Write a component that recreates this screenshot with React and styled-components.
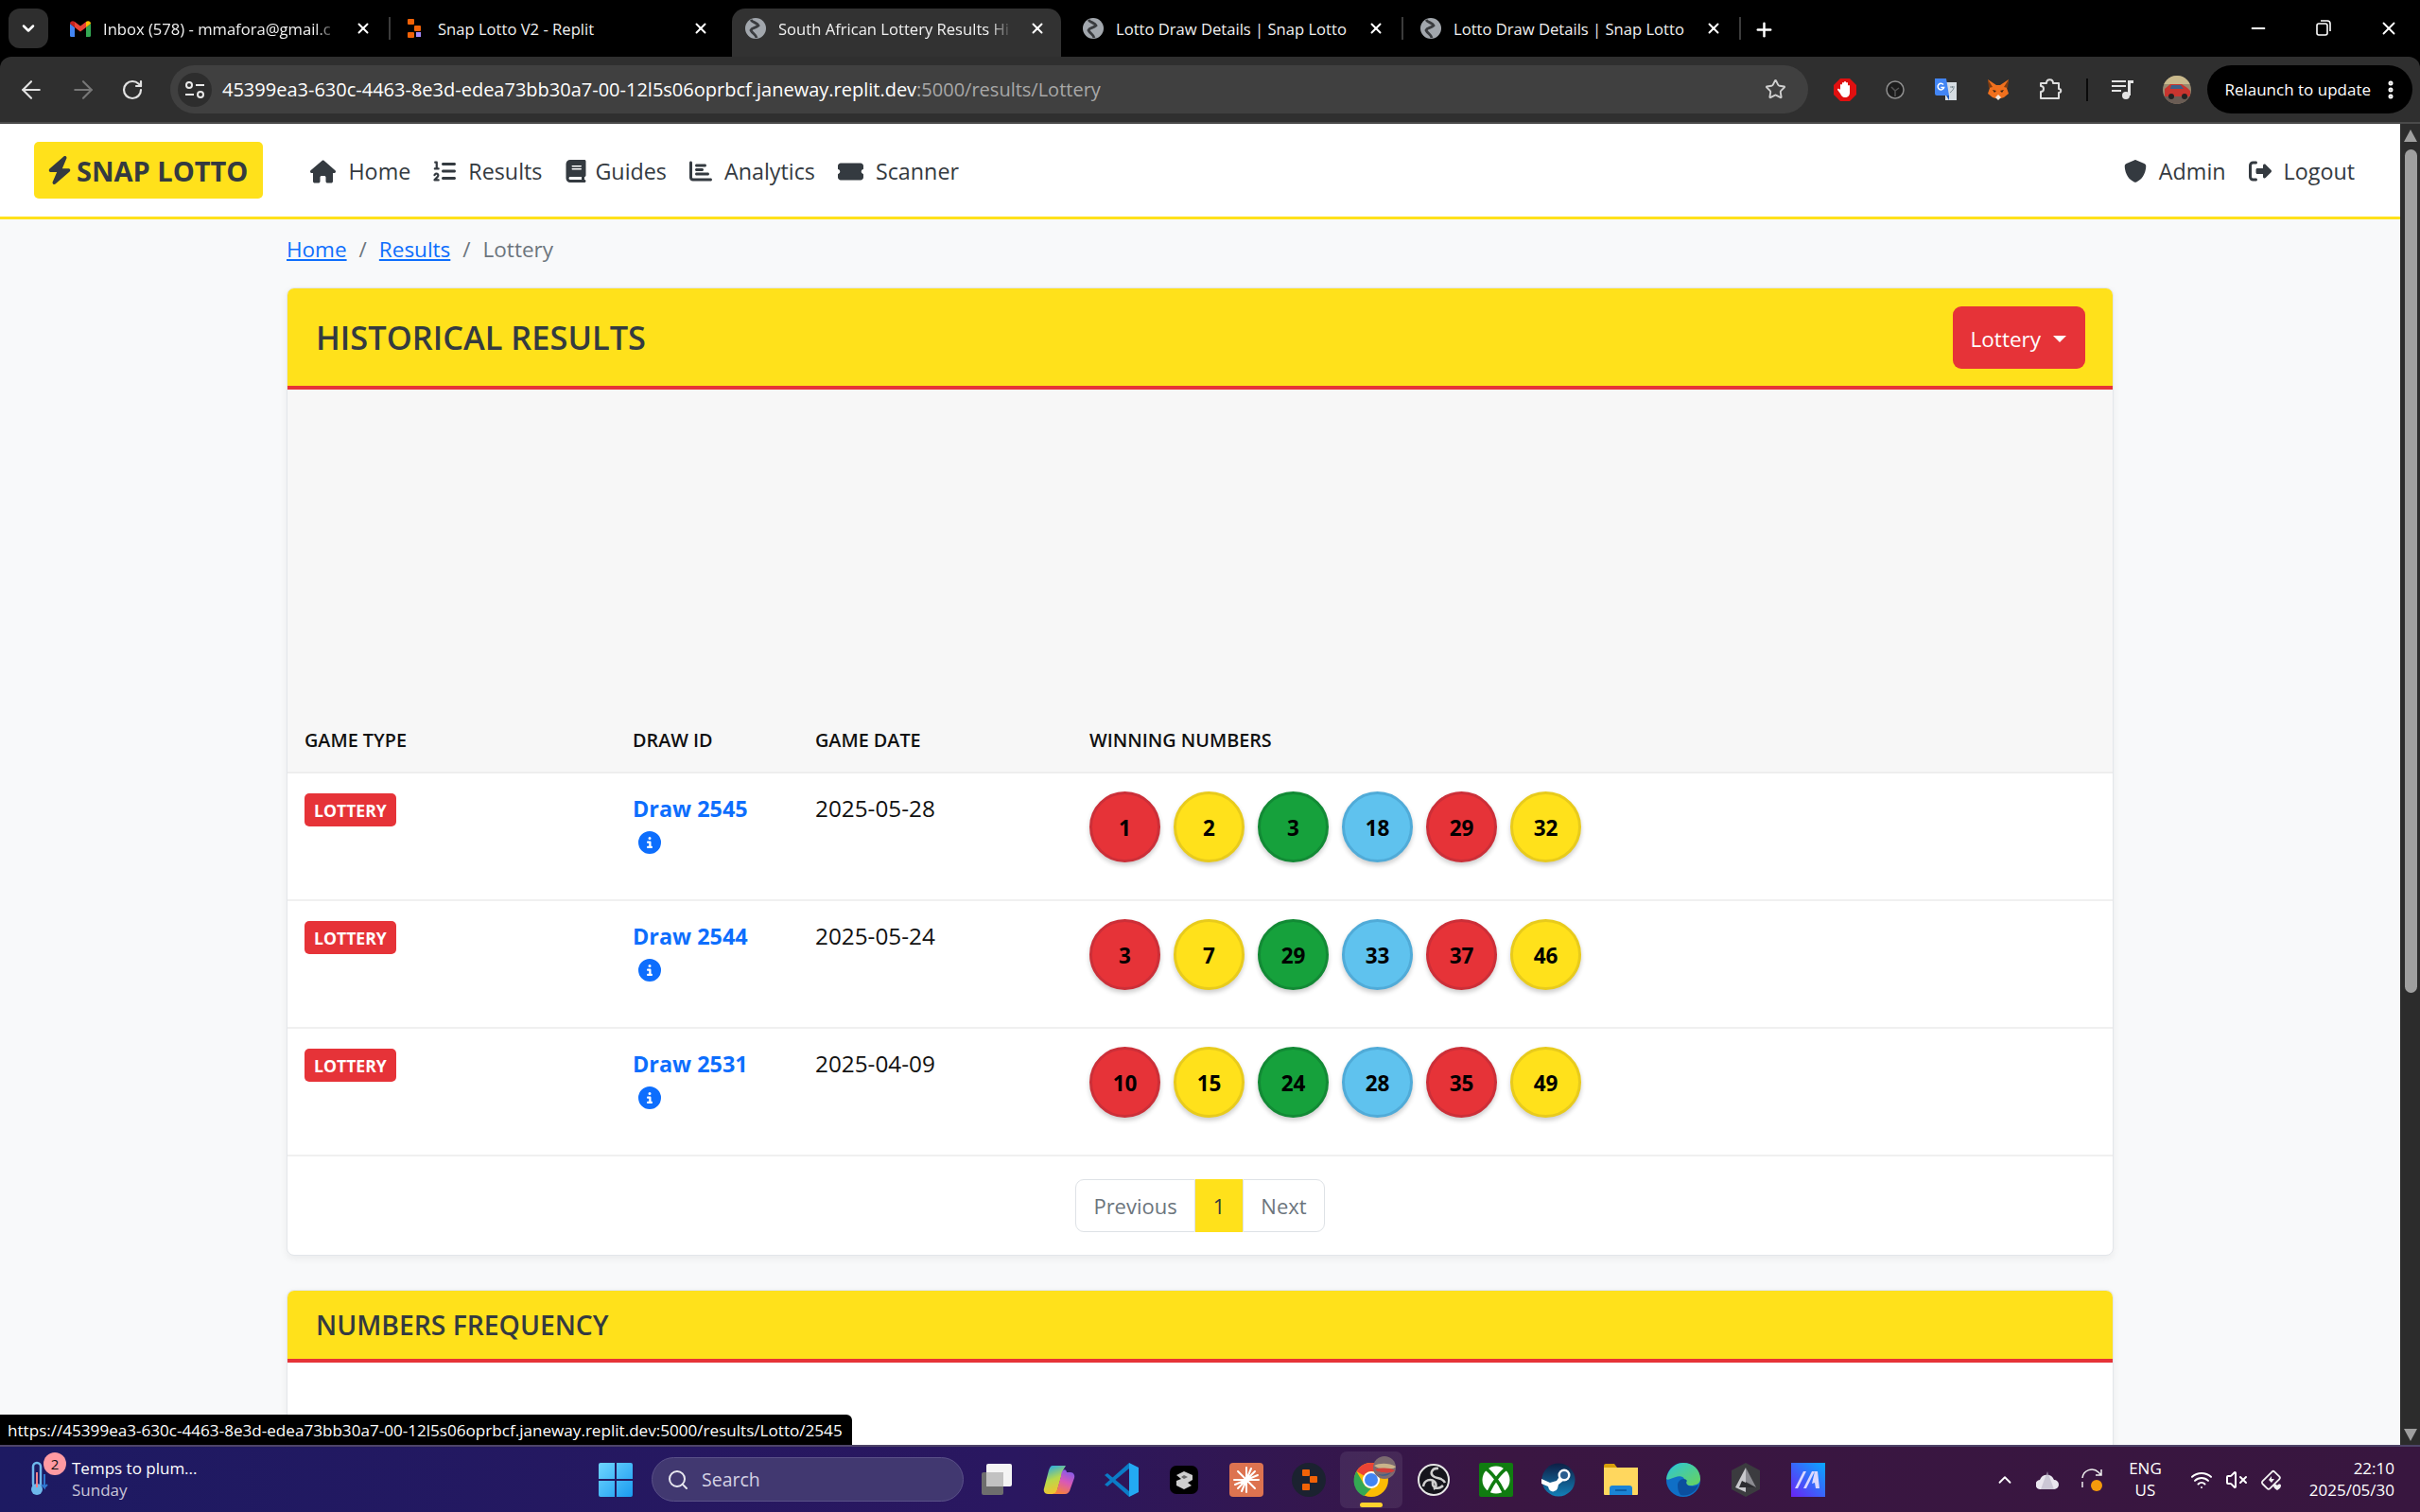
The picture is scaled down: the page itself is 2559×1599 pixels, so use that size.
import React from 'react';
import styled, { createGlobalStyle } from 'styled-components';
import { ArrowLeft, ArrowRight, RotateCw, Star, X, Minus, Plus, ChevronDown, ChevronUp, Search as SearchIcon, Wifi, VolumeX, EllipsisVertical } from 'lucide-react';
import { FaBolt, FaHouse, FaListOl, FaBook, FaChartBar, FaTicketSimple, FaShield, FaRightFromBracket, FaCircleInfo } from 'react-icons/fa6';

const YELLOW = '#ffe11b';
const RED = '#e63338';
const FONT = '"Open Sans", "Noto Sans", sans-serif';

const GlobalStyle = createGlobalStyle`
  html, body { margin: 0; padding: 0; overflow: hidden; background: #000; }
  * { box-sizing: border-box; }
  body { font-family: ${FONT}; }
`;

const Screen = styled.div`
  display: flex;
  flex-direction: column;
  width: 2559px;
  height: 1599px;
  overflow: hidden;
`;

/* browser chrome */
const TabBar = styled.div`
  display: flex;
  align-items: flex-end;
  height: 60px;
  flex: none;
  background: #000;
  color: #fff;
`;

const TabMenu = styled.div`
  display: flex;
  align-items: center;
  justify-content: center;
  width: 42px;
  height: 42px;
  margin: 0 9px 9px;
  border-radius: 12px;
  background: #2e2e2e;
`;

const Tab = styled.div`
  position: relative;
  display: flex;
  align-items: center;
  width: ${p => (p.$active ? '348px' : '357px')};
  height: 51px;
  margin-right: ${p => (p.$active ? '9px' : '0')};
  padding: 0 ${p => (p.$active ? '16px' : '24px')} 9px 14px;
  font-size: 16.6px;
  border-radius: 14px 14px 0 0;
  background: ${p => (p.$active ? '#323232' : 'transparent')};

  &::after {
    content: '';
    display: ${p => (p.$sep ? 'block' : 'none')};
    position: absolute;
    right: 4px;
    top: 9px;
    height: 24px;
    width: 2px;
    background: #3c3c3c;
  }
`;

const TabTitle = styled.span`
  flex: 1;
  margin: 0 17px 0 13px;
  white-space: nowrap;
  color: #f1f1f1;
  ${p => (p.$fade ? 'mask-image: linear-gradient(to right, #000 90%, transparent);' : '')}
`;

const NewTab = styled.div`
  display: flex;
  padding: 0 0 17px 9px;
`;

const WindowControls = styled.div`
  display: flex;
  gap: 47px;
  margin-left: auto;
  padding: 0 22px 19px 0;
`;

const Toolbar = styled.div`
  display: flex;
  align-items: center;
  flex: none;
  height: 71px;
  padding: 0 8px 0 18px;
  background: #2f2f2f;
  border-bottom: 2px solid #4a4a4a;
  border-radius: 12px 12px 0 0;
  color: #d8d8d8;
`;

const NavIcons = styled.div`
  display: flex;
  align-items: center;
  gap: 25px;
  margin-right: 28px;
`;

const Omnibox = styled.div`
  display: flex;
  align-items: center;
  width: 1732px;
  height: 51px;
  padding: 0 23px 0 8px;
  border-radius: 26px;
  background: #404040;
  font-size: 20px;
`;

const SiteControls = styled.div`
  display: flex;
  align-items: center;
  justify-content: center;
  width: 36px;
  height: 36px;
  margin-right: 11px;
  border-radius: 50%;
  background: #2d2d2d;
`;

const Host = styled.span`
  color: #fff;
  white-space: nowrap;
`;

const Path = styled.span`
  color: #a8a8a8;
  white-space: nowrap;
`;

const Extensions = styled.div`
  display: flex;
  align-items: center;
  margin-left: 27px;
  gap: 31px;
`;

const ToolDivider = styled.div`
  width: 2px;
  height: 24px;
  margin: 0 -6px;
  background: #0a0a0a;
`;

const Relaunch = styled.div`
  display: flex;
  align-items: center;
  gap: 9px;
  height: 51px;
  margin-left: auto;
  padding: 0 11px 0 18px;
  border-radius: 26px;
  background: #000;
  color: #fff;
  font-size: 17px;
  white-space: nowrap;
`;

/* page */
const Viewport = styled.div`
  position: relative;
  flex: 1;
  display: flex;
  min-height: 0;
  background: #f8f9fa;
`;

const Page = styled.div`
  flex: 1;
  min-width: 0;
  overflow: hidden;
`;

const Navbar = styled.nav`
  display: flex;
  align-items: center;
  height: 101px;
  padding: 0 36px;
  background: #fff;
  border-bottom: 3px solid ${YELLOW};
  color: #343a40;
`;

const Brand = styled.div`
  display: flex;
  align-items: center;
  gap: 3px;
  height: 60px;
  padding: 0 16px 0 12px;
  margin-right: 50px;
  border-radius: 5px;
  background: ${YELLOW};
  font-size: 29px;
  font-weight: 700;
  white-space: nowrap;
`;

const NavGroup = styled.div`
  display: flex;
  align-items: center;
  gap: 24px;
  margin-left: ${p => (p.$right ? 'auto' : '0')};
  padding-right: ${p => (p.$right ? '12px' : '0')};
`;

const NavItem = styled.div`
  display: flex;
  align-items: center;
  gap: ${p => (p.$tight ? '8px' : '13px')};
  padding-top: 2px;
  font-size: 23.3px;
  font-weight: 500;
  white-space: nowrap;
`;

const Container = styled.main`
  width: 1932px;
  margin: 0 auto;
`;

const Breadcrumb = styled.div`
  display: flex;
  align-items: center;
  gap: 13px;
  height: 72px;
  padding-bottom: 10px;
  font-size: 22.5px;
  color: #6c757d;
`;

const CrumbLink = styled.a`
  color: #0d6efd;
  text-decoration: underline;
`;

const Card = styled.section`
  margin-bottom: 36px;
  background: #fff;
  border: 1px solid #e3e6ea;
  border-bottom-width: ${p => (p.$open ? '0' : '1px')};
  border-radius: 8px 8px ${p => (p.$open ? '0 0' : '8px 8px')};
  box-shadow: 0 3px 9px rgba(0, 0, 0, 0.06);
  overflow: hidden;
`;

const CardHeader = styled.header`
  display: flex;
  align-items: center;
  justify-content: space-between;
  height: ${p => p.$height}px;
  padding: 0 29px 0 30px;
  background: ${YELLOW};
  border-bottom: 4px solid ${RED};
`;

const CardTitle = styled.h2`
  margin: 0;
  font-size: ${p => p.$size}px;
  font-weight: 600;
  color: #343a40;
  white-space: nowrap;
`;

const DropButton = styled.button`
  display: flex;
  align-items: center;
  gap: 13px;
  height: 66px;
  padding: 3px 20px 0 19px;
  border: 0;
  border-radius: 9px;
  background: ${RED};
  color: #fff;
  font-family: inherit;
  font-size: 22.5px;

  &::after {
    content: '';
    border-top: 7px solid #fff;
    border-left: 7px solid transparent;
    border-right: 7px solid transparent;
  }
`;

const AdSlot = styled.div`
  height: 341px;
  background: #f7f7f7;
`;

const TableRow = styled.div`
  display: grid;
  grid-template-columns: 347px 193px 290px 1fr;
  padding: 0 18px;
`;

const HeadRow = styled(TableRow)`
  align-items: center;
  height: 65px;
  padding-bottom: 4px;
  background: #f7f7f7;
  border-bottom: 2px solid #eee;
  font-size: 19.8px;
  font-weight: 600;
  color: #111;
  white-space: nowrap;
`;

const BodyRow = styled(TableRow)`
  height: 135px;
  padding-top: 19px;
  border-bottom: 2px solid #f0f0f0;
`;

const Badge = styled.span`
  display: inline-flex;
  align-items: center;
  height: 35px;
  margin-top: 2px;
  padding: 0 10px;
  border-radius: 5px;
  background: ${RED};
  color: #fff;
  font-size: 17.6px;
  font-weight: 700;
`;

const DrawCell = styled.div`
  display: flex;
  flex-direction: column;
  align-items: flex-start;
`;

const DrawLink = styled.a`
  color: #0d6efd;
  font-size: 23.4px;
  font-weight: 700;
  line-height: 36px;
  white-space: nowrap;
`;

const InfoIcon = styled(FaCircleInfo)`
  margin: 6px 0 0 6px;
  color: #0d6efd;
`;

const DateCell = styled.div`
  font-size: 24.3px;
  font-weight: 500;
  line-height: 36px;
  color: #111;
`;

const Balls = styled.div`
  display: flex;
  gap: 14px;
`;

const Ball = styled.div`
  display: flex;
  align-items: center;
  justify-content: center;
  width: 75px;
  height: 75px;
  padding-top: 2px;
  border-radius: 50%;
  border: 3px solid ${p => p.$edge};
  background: ${p => p.$fill};
  box-shadow: 0 3px 5px rgba(0, 0, 0, 0.2);
  color: #000;
  font-size: 22.5px;
  font-weight: 700;
`;

const Pager = styled.div`
  display: flex;
  justify-content: center;
  padding: 24px 0;
`;

const PageItem = styled.div`
  display: flex;
  align-items: center;
  height: 56px;
  padding: 0 ${p => (p.$current ? '19px' : '18px')};
  background: ${p => (p.$current ? YELLOW : '#fff')};
  color: ${p => (p.$current ? '#343a40' : '#6c757d')};
  border: 1px solid #dee2e6;
  border-width: ${p => (p.$current ? '0' : '1px')};
  border-radius: ${p => p.$radius};
  font-size: 22px;
`;

const SectionBody = styled.div`
  height: 200px;
  background: #fff;
`;

const Scrollbar = styled.div`
  position: relative;
  flex: none;
  display: flex;
  flex-direction: column;
  align-items: center;
  justify-content: space-between;
  width: 21px;
  padding: 6px 0 4px;
  background: #2c2c2c;
`;

const ScrollThumb = styled.div`
  position: absolute;
  top: 27px;
  left: 5px;
  width: 13px;
  height: 892px;
  border-radius: 7px;
  background: #9f9f9f;
`;

const Arrow = styled.div`
  border-left: 7px solid transparent;
  border-right: 7px solid transparent;
  ${p => (p.$down ? 'border-top' : 'border-bottom')}: 13px solid #9f9f9f;
`;

const StatusTip = styled.div`
  position: absolute;
  left: 0;
  bottom: 0;
  height: 32px;
  display: flex;
  align-items: center;
  padding: 0 10px 0 8px;
  border-radius: 0 6px 0 0;
  background: #000;
  color: #fff;
  font-size: 17.1px;
  white-space: nowrap;
`;

/* taskbar */
const Taskbar = styled.footer`
  display: flex;
  align-items: center;
  flex: none;
  height: 71px;
  border-top: 2px solid #4e4468;
  background: linear-gradient(90deg, #1d1a62 0%, #2a1760 42%, #3a1642 62%, #38163f 100%);
  color: #fff;
`;

const Weather = styled.div`
  position: relative;
  display: flex;
  align-items: center;
  width: 618px;
  padding-left: 32px;
`;

const WeatherBadge = styled.span`
  position: absolute;
  left: 46px;
  top: -7px;
  display: flex;
  align-items: center;
  justify-content: center;
  width: 24px;
  height: 24px;
  border-radius: 50%;
  background: #ff9aa2;
  color: #111;
  font-size: 15px;
`;

const WeatherText = styled.div`
  display: flex;
  flex-direction: column;
  gap: 3px;
  margin-left: 24px;
  font-size: 17px;
  line-height: 20px;
`;

const WeatherSub = styled.span`
  color: #c9c6d8;
`;

const TaskSlot = styled.div`
  display: flex;
  align-items: center;
  justify-content: center;
  width: 66px;
  height: 60px;
  border-radius: 7px;
  position: relative;
  background: ${p => (p.$active ? 'rgba(255,255,255,0.08)' : 'transparent')};

  &::after {
    content: '';
    display: ${p => (p.$active ? 'block' : 'none')};
    position: absolute;
    bottom: 1px;
    left: 21px;
    width: 24px;
    height: 5px;
    border-radius: 3px;
    background: #ffd22e;
  }
`;

const SearchBox = styled.div`
  display: flex;
  align-items: center;
  gap: 13px;
  width: 330px;
  height: 47px;
  margin: 0 2px 0 5px;
  padding-left: 15px;
  border-radius: 24px;
  background: #413870;
  border: 1px solid #5a5188;
  color: #d4d2e4;
  font-size: 19.5px;
`;

const Tray = styled.div`
  display: flex;
  align-items: center;
  margin-left: auto;
  padding-right: 27px;
  gap: 22px;
`;

const Lang = styled.div`
  display: flex;
  flex-direction: column;
  align-items: center;
  gap: 3px;
  margin: 0 8px 0 4px;
  font-size: 17px;
  line-height: 20px;
`;

const Clock = styled.div`
  display: flex;
  flex-direction: column;
  align-items: flex-end;
  gap: 3px;
  margin-left: 4px;
  font-size: 17px;
  line-height: 20px;
`;

const TrayIcons = styled.div`
  display: flex;
  align-items: center;
  gap: 13px;
`;

/* little drawings */
const GmailIcon = () => (
  <svg width="22" height="17" viewBox="0 0 22 17">
    <path d="M0 3v12.5A1.5 1.5 0 0 0 1.5 17H5V7z" fill="#4285f4" />
    <path d="M22 3v12.5a1.5 1.5 0 0 1-1.500 1.500H17V7z" fill="#34a853" />
    <path d="M5 7l6 4.500L17 7V1l-6 4.500L5 1z" fill="#ea4335" />
    <path d="M0 3c0-2.500 3-3.500 5-2v6L0 3z" fill="#c5221f" />
    <path d="M22 3c0-2.500-3-3.500-5-2v6l5-4z" fill="#fbbc04" />
  </svg>
);

const ReplitIcon = () => (
  <svg width="19" height="20" viewBox="0 0 19 20">
    <rect x="0" y="0" width="7" height="6" rx="1" fill="#f26207" />
    <rect x="7" y="7" width="7" height="6" rx="1" fill="#f26207" />
    <rect x="0" y="14" width="7" height="6" rx="1" fill="#f26207" />
    <rect x="9" y="14" width="5" height="5" fill="#a78bfa" />
  </svg>
);

const TabGlobe = () => (
  <svg width="22" height="22" viewBox="0 0 22 22" fill="none">
    <circle cx="11" cy="11" r="11" fill="#a2a7ad" />
    <path d="M6 2c2 3 7 3 8 6-3 3-7 2-8 5 2 4 5 4 6 8" stroke="#3a3c3f" strokeWidth="2.800" />
  </svg>
);

const SiteIcon = () => (
  <svg width="22" height="20" viewBox="0 0 22 20" fill="none" stroke="#e8e8e8" strokeWidth="2">
    <circle cx="5" cy="5" r="3" />
    <path d="M12 5h9M1 15h9" />
    <circle cx="17" cy="15" r="3" />
  </svg>
);

const HandIcon = () => (
  <svg width="24" height="24" viewBox="0 0 24 24">
    <path d="M7 0h10l7 7v10l-7 7H7l-7-7V7z" fill="#e01010" />
    <path d="M7 12V7a1 1 0 0 1 2 0V5a1 1 0 0 1 2 0V4a1 1 0 0 1 2 0v1a1 1 0 0 1 2 0v3a1 1 0 0 1 2 0v7c0 3-2 5-5 5s-4-2-5-4l-3-4c0-1 1-2 3 0z" fill="#fff" />
  </svg>
);

const DarkExtIcon = () => (
  <svg width="20" height="20" viewBox="0 0 20 20" fill="none" stroke="#8f8f8f" strokeWidth="1.500">
    <circle cx="10" cy="10" r="9" fill="#1c1c1c" />
    <path d="M6 7l4 4 4-3M10 11v6" stroke="#555" />
  </svg>
);

const TranslateIcon = () => (
  <svg width="25" height="25" viewBox="0 0 25 25">
    <path d="M12 5h12v19H12z" fill="#d6dde3" />
    <path d="M1 1h12l3 18H3a2 2 0 0 1-2-2z" fill="#4285f4" />
    <path d="M16 24l-3-5h3z" fill="#1a56b8" />
    <path d="M17 10h5M19.500 9v2M21 11c-1 3-3 4-4 5" stroke="#7b8a92" strokeWidth="1" fill="none" />
    <path d="M10 7.500a3.300 3.300 0 1 0 .6 3H7.300" stroke="#fff" strokeWidth="1.500" fill="none" />
  </svg>
);

const FoxIcon = () => (
  <svg width="24" height="22" viewBox="0 0 24 22">
    <path d="M1 0l9 6h4l9-6-2 9 2 6-5 4-3 1h-6l-3-1-5-4 2-6z" fill="#f0701d" />
    <path d="M1 0l5 8-4 1zM23 0l-5 8 4 1z" fill="#7c3c12" />
    <path d="M9 19l3-3 3 3-3 3z" fill="#efe6dc" />
    <path d="M6 11l4 1-2 2zM18 11l-4 1 2 2z" fill="#3a2415" />
  </svg>
);

const PuzzleIcon = () => (
  <svg width="25" height="25" viewBox="0 0 25 25" fill="none" stroke="#dedede" strokeWidth="2" strokeLinejoin="round">
    <path d="M2 6h6c0-5 7-5 7 0h6v6c3 0 3 4 0 4v6H2v-7c4 0 4-6 0-6z" />
  </svg>
);

const MediaIcon = () => (
  <svg width="23" height="21" viewBox="0 0 23 21" fill="#e4e4e4">
    <path d="M0 1h15v2H0zM0 6h15v2H0zM0 11h10v2H0z" />
    <path d="M17 1h6v3h-3v13h-3z" />
    <circle cx="15" cy="17" r="4" />
  </svg>
);

const AvatarIcon = () => (
  <svg width="30" height="30" viewBox="0 0 30 30">
    <clipPath id="avatarClip"><circle cx="15" cy="15" r="15" /></clipPath>
    <g clipPath="url(#avatarClip)">
      <rect width="30" height="30" fill="#9a8a70" />
      <rect width="30" height="9" fill="#c9b98c" />
      <rect y="22" width="30" height="8" fill="#6a5c54" />
      <path d="M2 14l6-5h12l6 4 3 3v6H2z" fill="#c8352f" />
      <path d="M9 10h10l3 4H8z" fill="#3c5f88" />
      <circle cx="9" cy="22" r="3" fill="#222" />
      <circle cx="23" cy="22" r="3" fill="#222" />
    </g>
  </svg>
);

const WindowsIcon = () => (
  <svg width="36" height="36" viewBox="0 0 36 36">
    <defs>
      <linearGradient id="win" x1="0" y1="0" x2="1" y2="1">
        <stop offset="0" stopColor="#6fd6ff" />
        <stop offset="1" stopColor="#1a9bf0" />
      </linearGradient>
    </defs>
    <path d="M0 2a2 2 0 0 1 2-2h15v17H0zM19 0h15a2 2 0 0 1 2 2v15H19zM0 19h17v17H2a2 2 0 0 1-2-2zM19 19h17v15a2 2 0 0 1-2 2H19z" fill="url(#win)" />
  </svg>
);

const TaskViewIcon = () => (
  <svg width="32" height="34" viewBox="0 0 32 34">
    <rect x="5" y="0" width="27" height="24" rx="2" fill="#f4f4f4" />
    <rect x="0" y="9" width="23" height="24" rx="2" fill="#6e6e6e" />
    <rect x="5" y="9" width="18" height="15" fill="#c2c2c2" />
  </svg>
);

const CopilotIcon = () => (
  <svg width="34" height="32" viewBox="0 0 34 32">
    <defs>
      <linearGradient id="cpA" x1="0.2" y1="0" x2="0.5" y2="1">
        <stop offset="0" stopColor="#25a9e8" />
        <stop offset=".5" stopColor="#b7d84c" />
        <stop offset="1" stopColor="#f7c22e" />
      </linearGradient>
      <linearGradient id="cpB" x1="0.8" y1="0" x2="0.4" y2="1">
        <stop offset="0" stopColor="#7a5bf0" />
        <stop offset=".5" stopColor="#d858b8" />
        <stop offset="1" stopColor="#f6813c" />
      </linearGradient>
    </defs>
    <path d="M10 1h14l-3 5-6 21c-1 3-2 4-5 4H5c-3 0-5-3-4-6L6 6c1-3 2-5 4-5z" fill="url(#cpA)" />
    <path d="M21 6c2-2 4 0 4 2h4c3 0 5 3 4 6l-4 11c-1 4-3 6-6 6H9c3 0 5-2 6-5l4-14c0-3 1-5 2-6z" fill="url(#cpB)" />
  </svg>
);

const VsCodeIcon = () => (
  <svg width="36" height="36" viewBox="0 0 36 36">
    <path d="M26 0v36L0 13l3-2 23 19V6L3 25l-3-2z" fill="#0b7cc7" />
    <path d="M26 0l10 5v26l-10 5z" fill="#23a9f2" />
  </svg>
);

const CubeIcon = () => (
  <svg width="30" height="30" viewBox="0 0 30 30">
    <rect width="30" height="30" rx="7" fill="#000" />
    <path d="M15 6l9 4v5l-5 3 4 3-8 4-8-4v-5l5-2-5-4z" fill="#cfcfcf" />
    <path d="M15 14l-3-2 3-2 4 2z" fill="#6a6a6a" />
  </svg>
);

const BurstIcon = () => (
  <svg width="36" height="36" viewBox="0 0 36 36">
    <rect width="36" height="36" rx="4" fill="#dd7350" />
    <g stroke="#fff" strokeWidth="2" strokeLinecap="round">
      <path d="M18 18V5M18 18V31M18 18H31M18 18H5M18 18L27 9M18 18L9 27M18 18L27 27M18 18L9 9M18 18L23 6M18 18L13 30M18 18L30 13M18 18L6 23" />
    </g>
  </svg>
);

const ReplitTile = () => (
  <svg width="36" height="36" viewBox="0 0 36 36">
    <circle cx="18" cy="18" r="18" fill="#1b2230" />
    <rect x="11" y="7" width="8" height="7" rx="1" fill="#f26207" />
    <rect x="19" y="14" width="8" height="7" rx="1" fill="#f26207" />
    <rect x="11" y="22" width="8" height="7" rx="1" fill="#f26207" />
  </svg>
);

const ChromeIcon = () => (
  <svg width="36" height="36" viewBox="0 0 36 36" style={{ overflow: 'visible' }}>
    <circle cx="18" cy="18" r="18" fill="#fbbc04" />
    <path d="M18 0a18 18 0 0 1 15.600 9H18a9 9 0 0 0-7.800 4.500L2.400 9A18 18 0 0 1 18 0z" fill="#ea4335" />
    <path d="M2.400 9l7.800 13.500A9 9 0 0 0 18 27l-7.800 8.200A18 18 0 0 1 2.400 9z" fill="#34a853" />
    <circle cx="18" cy="18" r="9" fill="#fff" />
    <circle cx="18" cy="18" r="7" fill="#4285f4" />
    <circle cx="32" cy="5" r="12" fill="#7b6a70" />
    <path d="M21 3c6-3 16-3 23 1-2 3-6 2-9 2-5 0-9 1-14-3z" fill="#c9b48a" />
    <path d="M22 7c7-2 15-2 21 1-3 3-8 3-11 2-4 0-7 0-10-3z" fill="#d0403a" />
    <path d="M25 12c5 1 9 0 14-2-2 4-10 5-14 2z" fill="#3f5f86" />
  </svg>
);

const ObsIcon = () => (
  <svg width="34" height="34" viewBox="0 0 34 34" fill="none">
    <circle cx="17" cy="17" r="16" fill="#15151c" stroke="#e6e6e6" strokeWidth="2" />
    <path d="M22 5c-7-1-10 6-4 9 4 2 9 1 11 6M6 24c1-7 8-9 12-5 3 3 1 7-1 8M27 23c-5 5-12 3-11-4" stroke="#cfcfcf" strokeWidth="2.500" />
  </svg>
);

const XboxIcon = () => (
  <svg width="36" height="36" viewBox="0 0 36 36">
    <rect width="36" height="36" rx="2" fill="#107c10" />
    <circle cx="18" cy="18" r="14.500" fill="#fff" />
    <path d="M7 6c6 4 14 14 19 25M29 6c-6 4-14 14-19 25" stroke="#107c10" strokeWidth="3.500" fill="none" />
  </svg>
);

const SteamIcon = () => (
  <svg width="36" height="36" viewBox="0 0 36 36">
    <defs>
      <linearGradient id="st" x1="0" y1="0" x2="0" y2="1">
        <stop offset="0" stopColor="#0e1f45" />
        <stop offset="1" stopColor="#1380b8" />
      </linearGradient>
    </defs>
    <circle cx="18" cy="18" r="17.500" fill="url(#st)" />
    <path d="M0 17l9 4 7-2 4-6 3 6-5 4-1 4a5 5 0 0 1-9 1l-1-3-7-3z" fill="#fff" />
    <circle cx="24" cy="13" r="6.500" fill="#fff" />
    <circle cx="24" cy="13" r="4" fill="#2a5d8f" />
  </svg>
);

const FolderIcon = () => (
  <svg width="36" height="34" viewBox="0 0 36 34">
    <path d="M0 2a2 2 0 0 1 2-2h9l3 4h-14z" fill="#d79f0a" />
    <path d="M0 4h36v28a1 1 0 0 1-1 1H1a1 1 0 0 1-1-1z" fill="#ffd75e" />
    <path d="M6 26a3 3 0 0 1 3-3h18a3 3 0 0 1 3 3v7H6z" fill="#1a84d6" />
    <rect x="12" y="27" width="12" height="2" fill="#0b5ea8" />
  </svg>
);

const EdgeIcon = () => (
  <svg width="36" height="36" viewBox="0 0 36 36">
    <defs>
      <linearGradient id="edg" x1="0" y1="0" x2="1" y2="1">
        <stop offset="0" stopColor="#2bc5d9" />
        <stop offset="1" stopColor="#6ad35a" />
      </linearGradient>
    </defs>
    <circle cx="18" cy="18" r="18" fill="#0f6fc6" />
    <path d="M0 17C2 6 10 0 18 0c10 0 18 7 18 17 0 5-5 7-10 7-5 0-7-2-7-4 2-5-5-7-9-5-4 1-8 4-10 2z" fill="url(#edg)" />
    <path d="M12 24c0-7 8-9 10-5-2 2 0 6 5 6 3 0 5-1 7-2-3 9-12 13-19 11-2-3-3-6-3-10z" fill="#0b4f9e" />
  </svg>
);

const HexIcon = () => (
  <svg width="32" height="36" viewBox="0 0 32 36">
    <path d="M16 0l15 8v20l-15 8-15-8V8z" fill="#3b3b3f" />
    <path d="M16 5L5 26l11 5z" fill="#c8c8cc" />
    <path d="M16 5l11 21-11-6z" fill="#8c8c92" />
    <path d="M12 19l14 7H9z" fill="#2c2c30" />
  </svg>
);

const ManusIcon = () => (
  <svg width="36" height="36" viewBox="0 0 36 36">
    <defs>
      <linearGradient id="mn" x1="1" y1="0" x2="0" y2="1">
        <stop offset="0" stopColor="#08a8ff" />
        <stop offset="1" stopColor="#6a23f5" />
      </linearGradient>
    </defs>
    <rect width="36" height="36" fill="url(#mn)" />
    <path d="M4 27l9-18h3l-9 18zM13 27l9-18h3l-9 18zM25 9h3l2 18h-4l-1-6-3 1z" fill="#dcd8ff" />
  </svg>
);

const ThermoIcon = () => (
  <svg width="20" height="40" viewBox="0 0 20 40">
    <rect x="3" y="2" width="8" height="26" rx="4" fill="none" stroke="#6db8ec" strokeWidth="2.500" />
    <circle cx="7" cy="30" r="6" fill="#6db8ec" />
    <rect x="6" y="12" width="2" height="16" fill="#f2808a" />
    <path d="M15 14v14l-3-3M15 28l3-3" stroke="#2f77d0" strokeWidth="2" fill="none" />
  </svg>
);

const CloudIcon = () => (
  <svg width="24" height="22" viewBox="0 0 24 22">
    <path d="M5 21a5 5 0 0 1-1-10 8 8 0 0 1 15 0 5 5 0 0 1 0 10z" fill="#e9e6ee" />
    <path d="M12 2l7 19H5z" fill="#b7b2c4" opacity=".6" />
  </svg>
);

const SyncIcon = () => (
  <svg width="26" height="28" viewBox="0 0 26 28" fill="none" stroke="#eee" strokeWidth="1.500">
    <path d="M3 12a10 10 0 0 1 17-6l3 3M23 3v6h-6M3 16v6" />
    <circle cx="18" cy="20" r="6" fill="#f59a0b" stroke="none" />
  </svg>
);

const PowerIcon = () => (
  <svg width="26" height="26" viewBox="0 0 26 26" fill="none" stroke="#f2f2f2" strokeWidth="1.800">
    <rect x="2" y="8" width="18" height="11" rx="2" transform="rotate(-45 11 13)" />
    <path d="M9 13l3-4v3h3l-3 4z" fill="#f2f2f2" stroke="none" />
    <path d="M18 24c-3-2-4-3-4-5 0-2 3-2 4 0 1-2 4-2 4 0 0 2-1 3-4 5z" fill="#f2f2f2" stroke="none" />
  </svg>
);

const TABS = [
  { title: 'Inbox (578) - mmafora@gmail.c', icon: <GmailIcon />, sep: true, fade: true },
  { title: 'Snap Lotto V2 - Replit', icon: <ReplitIcon />, sep: false },
  { title: 'South African Lottery Results Hi', icon: <TabGlobe />, active: true, sep: false, fade: true },
  { title: 'Lotto Draw Details | Snap Lotto', icon: <TabGlobe />, sep: true },
  { title: 'Lotto Draw Details | Snap Lotto', icon: <TabGlobe />, sep: true },
];

const NAV_LEFT = [
  { label: 'Home', icon: <FaHouse size={27} /> },
  { label: 'Results', icon: <FaListOl size={24} /> },
  { label: 'Guides', icon: <FaBook size={24} />, tight: true },
  { label: 'Analytics', icon: <FaChartBar size={24} /> },
  { label: 'Scanner', icon: <FaTicketSimple size={27} /> },
];

const BALL_COLORS = [
  { fill: RED, edge: '#cc2f38' },
  { fill: YELLOW, edge: '#e8cb1c' },
  { fill: '#16a13c', edge: '#128a35' },
  { fill: '#5fc2ee', edge: '#50abd8' },
  { fill: RED, edge: '#cc2f38' },
  { fill: YELLOW, edge: '#e8cb1c' },
];

const DRAWS = [
  { id: 2545, date: '2025-05-28', numbers: [1, 2, 3, 18, 29, 32] },
  { id: 2544, date: '2025-05-24', numbers: [3, 7, 29, 33, 37, 46] },
  { id: 2531, date: '2025-04-09', numbers: [10, 15, 24, 28, 35, 49] },
];

const APPS_LEFT = [<TaskViewIcon />, <CopilotIcon />, <VsCodeIcon />, <CubeIcon />, <BurstIcon />, <ReplitTile />];
const APPS_RIGHT = [<ObsIcon />, <XboxIcon />, <SteamIcon />, <FolderIcon />, <EdgeIcon />, <HexIcon />, <ManusIcon />];

function App() {
  return (
    <Screen>
      <GlobalStyle />
      <TabBar>
        <TabMenu><ChevronDown size={20} color="#fff" strokeWidth={3} /></TabMenu>
        {TABS.map((tab, i) => (
          <Tab key={i} $active={tab.active} $sep={tab.sep}>
            {tab.icon}
            <TabTitle $fade={tab.fade}>{tab.title}</TabTitle>
            <X size={18} color="#fff" strokeWidth={2.6} />
          </Tab>
        ))}
        <NewTab><Plus size={23} color="#fff" strokeWidth={2.6} /></NewTab>
        <WindowControls>
          <Minus size={22} color="#fff" />
          <svg width="22" height="22" viewBox="0 0 22 22" fill="none" stroke="#fff" strokeWidth="1.600">
            <rect x="4" y="6" width="11" height="12" rx="2" />
            <path d="M8 3h7a3 3 0 0 1 3 3v8" />
          </svg>
          <X size={22} color="#fff" />
        </WindowControls>
      </TabBar>

      <Toolbar>
        <NavIcons>
          <ArrowLeft size={30} color="#e2e2e2" strokeWidth={1.7} />
          <ArrowRight size={30} color="#777" strokeWidth={1.7} />
          <RotateCw size={24} color="#e2e2e2" strokeWidth={2.2} />
        </NavIcons>
        <Omnibox>
          <SiteControls><SiteIcon /></SiteControls>
          <Host>45399ea3-630c-4463-8e3d-edea73bb30a7-00-12l5s06oprbcf.janeway.replit.dev</Host>
          <Path>:5000/results/Lottery</Path>
          <Star size={23} color="#cfcfcf" strokeWidth={2} style={{ marginLeft: 'auto' }} />
        </Omnibox>
        <Extensions>
          <HandIcon />
          <DarkExtIcon />
          <TranslateIcon />
          <FoxIcon />
          <PuzzleIcon />
          <ToolDivider />
          <MediaIcon />
          <AvatarIcon />
        </Extensions>
        <Relaunch>
          Relaunch to update
          <EllipsisVertical size={24} color="#fff" strokeWidth={3} />
        </Relaunch>
      </Toolbar>

      <Viewport>
        <Page>
          <Navbar>
            <Brand><FaBolt size={30} />SNAP LOTTO</Brand>
            <NavGroup>
              {NAV_LEFT.map(item => (
                <NavItem key={item.label} $tight={item.tight}>{item.icon}{item.label}</NavItem>
              ))}
            </NavGroup>
            <NavGroup $right>
              <NavItem><FaShield size={24} />Admin</NavItem>
              <NavItem><FaRightFromBracket size={24} />Logout</NavItem>
            </NavGroup>
          </Navbar>
          <Container>
            <Breadcrumb>
              <CrumbLink>Home</CrumbLink>/
              <CrumbLink>Results</CrumbLink>/
              <span>Lottery</span>
            </Breadcrumb>
            <Card>
              <CardHeader $height={107}>
                <CardTitle $size={34.4}>HISTORICAL RESULTS</CardTitle>
                <DropButton>Lottery</DropButton>
              </CardHeader>
              <AdSlot />
              <HeadRow>
                <span>GAME TYPE</span>
                <span>DRAW ID</span>
                <span>GAME DATE</span>
                <span>WINNING NUMBERS</span>
              </HeadRow>
              {DRAWS.map(draw => (
                <BodyRow key={draw.id}>
                  <div><Badge>LOTTERY</Badge></div>
                  <DrawCell>
                    <DrawLink>Draw {draw.id}</DrawLink>
                    <InfoIcon size={24} />
                  </DrawCell>
                  <DateCell>{draw.date}</DateCell>
                  <Balls>
                    {draw.numbers.map((n, i) => (
                      <Ball key={i} $fill={BALL_COLORS[i].fill} $edge={BALL_COLORS[i].edge}>{n}</Ball>
                    ))}
                  </Balls>
                </BodyRow>
              ))}
              <Pager>
                <PageItem $radius="9px 0 0 9px">Previous</PageItem>
                <PageItem $current>1</PageItem>
                <PageItem $radius="0 9px 9px 0">Next</PageItem>
              </Pager>
            </Card>
            <Card $open>
              <CardHeader $height={76}>
                <CardTitle $size={28.3}>NUMBERS FREQUENCY</CardTitle>
              </CardHeader>
              <SectionBody />
            </Card>
          </Container>
        </Page>
        <Scrollbar>
          <Arrow />
          <ScrollThumb />
          <Arrow $down />
        </Scrollbar>
        <StatusTip>https://45399ea3-630c-4463-8e3d-edea73bb30a7-00-12l5s06oprbcf.janeway.replit.dev:5000/results/Lotto/2545</StatusTip>
      </Viewport>

      <Taskbar>
        <Weather>
          <ThermoIcon />
          <WeatherBadge>2</WeatherBadge>
          <WeatherText>
            <span>Temps to plum...</span>
            <WeatherSub>Sunday</WeatherSub>
          </WeatherText>
        </Weather>
        <TaskSlot><WindowsIcon /></TaskSlot>
        <SearchBox><SearchIcon size={24} color="#e8e8f0" />Search</SearchBox>
        {APPS_LEFT.map((app, i) => <TaskSlot key={i}>{app}</TaskSlot>)}
        <TaskSlot $active><ChromeIcon /></TaskSlot>
        {APPS_RIGHT.map((app, i) => <TaskSlot key={i}>{app}</TaskSlot>)}
        <Tray>
          <ChevronUp size={22} color="#fff" />
          <CloudIcon />
          <SyncIcon />
          <Lang><span>ENG</span><span>US</span></Lang>
          <TrayIcons>
            <Wifi size={24} color="#fff" />
            <VolumeX size={24} color="#fff" />
            <PowerIcon />
          </TrayIcons>
          <Clock><span>22:10</span><span>2025/05/30</span></Clock>
        </Tray>
      </Taskbar>
    </Screen>
  );
}

export default App;
